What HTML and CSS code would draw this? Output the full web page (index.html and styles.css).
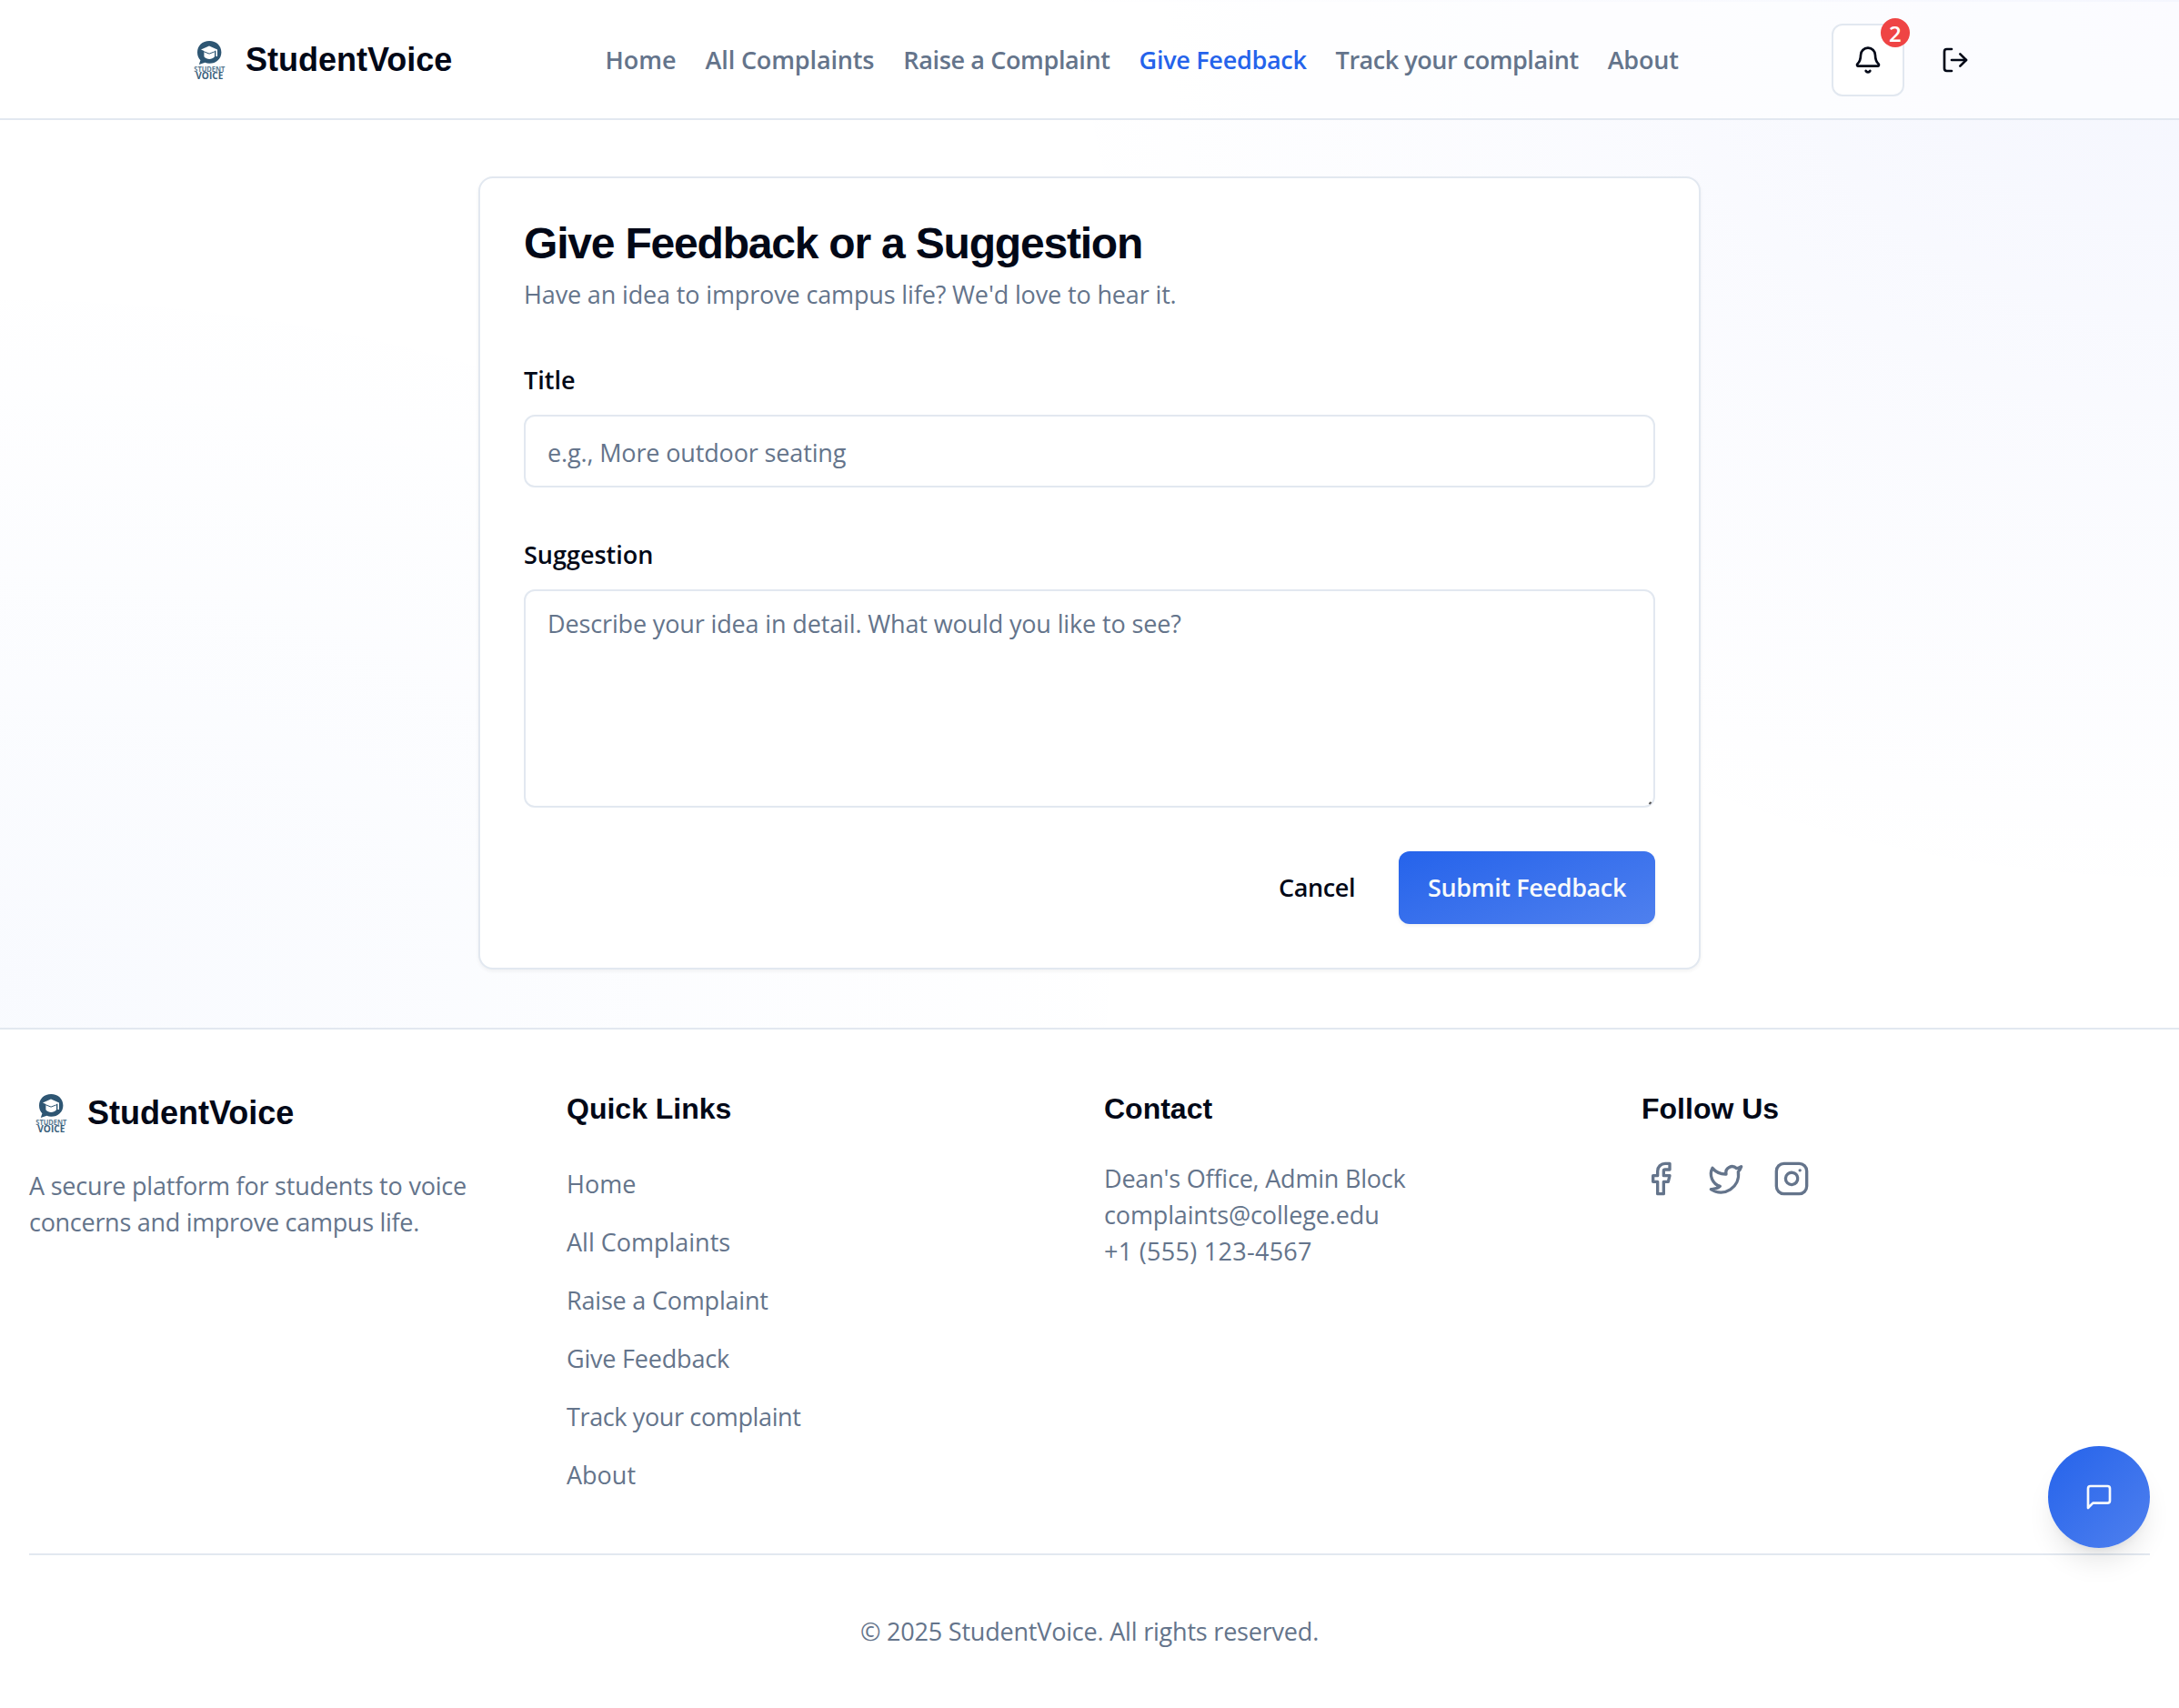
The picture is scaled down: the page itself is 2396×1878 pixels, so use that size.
FILE: index.html
```html
<!DOCTYPE html>
<html lang="en">
<head>
<meta charset="utf-8">
<title>StudentVoice</title>
<link rel="stylesheet" href="styles.css">
</head>
<body>
<header class="header">
  <div class="header-inner">
    <a class="brand">
      <svg class="brand-mark" viewBox="0 0 48 48">
        <path d="M24.200 2.900c-7.800 0-13.200 5.300-13.200 12.500 0 3.900 1.300 6.600 3.400 8.800L12.800 29l6.600-2.200c1.500.6 3.200.9 4.800.9 7.700 0 13.200-5.200 13.200-12.300S32 2.900 24.200 2.900z" fill="#2e5673"/>
        <path d="M24 8.600l-9 3.900 3.400 1.500v6.200c3 3.600 8.600 3.600 11.600 0V14l1.400-.6v6.600H33v-7.500z" fill="#fff"/>
        <path d="M18.300 14.800l5.800 2.300 5.700-2.200" fill="none" stroke="#2e5673"/>
        <text x="24.300" y="36.500" text-anchor="middle" textLength="34" lengthAdjust="spacingAndGlyphs" class="logo-small">STUDENT</text>
        <text x="24.300" y="44.700" text-anchor="middle" textLength="30" lengthAdjust="spacingAndGlyphs" class="logo-big">VOICE</text>
      </svg>
      <span class="brand-name">StudentVoice</span>
    </a>
    <nav class="nav">
      <a>Home</a>
      <a class="snug-1">All Complaints</a>
      <a class="snug-4">Raise a Complaint</a>
      <a class="active snug-3">Give Feedback</a>
      <a class="snug-5">Track your complaint</a>
      <a class="snug-1">About</a>
    </nav>
    <div class="actions">
      <button class="icon-btn outlined" aria-label="Notifications">
        <svg class="icon" viewBox="0 0 24 24"><path d="M10.268 21a2 2 0 0 0 3.464 0"/><path d="M3.262 15.326A1 1 0 0 0 4 17h16a1 1 0 0 0 .74-1.673C19.410 13.956 18 12.499 18 8A6 6 0 0 0 6 8c0 4.499-1.411 5.956-2.738 7.326"/></svg>
        <span class="badge">2</span>
      </button>
      <button class="icon-btn" aria-label="Log out">
        <svg class="icon" viewBox="0 0 24 24"><path d="M9 21H5a2 2 0 0 1-2-2V5a2 2 0 0 1 2-2h4"/><path d="M16 17l5-5-5-5"/><path d="M21 12H9"/></svg>
      </button>
    </div>
  </div>
</header>

<main class="main">
  <section class="card">
    <h1 class="card-title">Give Feedback or a Suggestion</h1>
    <p class="card-sub snug-1">Have an idea to improve campus life? We'd love to hear it.</p>
    <form class="form">
      <div class="field">
        <label for="title">Title</label>
        <input id="title" class="input snug-1" placeholder="e.g., More outdoor seating">
      </div>
      <div class="field grip">
        <label for="suggestion">Suggestion</label>
        <textarea id="suggestion" class="input textarea snug-1" placeholder="Describe your idea in detail. What would you like to see?"></textarea>
      </div>
      <div class="buttons">
        <button type="button" class="btn snug-4">Cancel</button>
        <button type="button" class="btn primary snug-4">Submit Feedback</button>
      </div>
    </form>
  </section>
</main>

<footer class="footer">
  <div class="columns">
    <div>
      <a class="brand">
        <svg class="brand-mark" viewBox="0 0 48 48">
          <path d="M24.200 2.900c-7.800 0-13.200 5.300-13.200 12.500 0 3.900 1.300 6.600 3.400 8.800L12.800 29l6.600-2.200c1.500.6 3.200.9 4.800.9 7.700 0 13.200-5.200 13.200-12.300S32 2.900 24.200 2.900z" fill="#2e5673"/>
          <path d="M24 8.600l-9 3.900 3.400 1.500v6.200c3 3.600 8.600 3.600 11.600 0V14l1.400-.6v6.600H33v-7.500z" fill="#fff"/>
          <path d="M18.300 14.800l5.800 2.300 5.700-2.200" fill="none" stroke="#2e5673"/>
          <text x="24.300" y="36.500" text-anchor="middle" textLength="34" lengthAdjust="spacingAndGlyphs" class="logo-small">STUDENT</text>
          <text x="24.300" y="44.700" text-anchor="middle" textLength="30" lengthAdjust="spacingAndGlyphs" class="logo-big">VOICE</text>
        </svg>
        <span class="brand-name">StudentVoice</span>
      </a>
      <p class="about"><span class="snug-2">A secure platform for students to voice</span> <span class="snug-3">concerns and improve campus life.</span></p>
    </div>
    <div>
      <h2 class="col-title">Quick Links</h2>
      <ul class="links">
        <li>Home</li>
        <li>All Complaints</li>
        <li class="snug-2">Raise a Complaint</li>
        <li class="snug-2">Give Feedback</li>
        <li class="snug-4">Track your complaint</li>
        <li>About</li>
      </ul>
    </div>
    <div>
      <h2 class="col-title">Contact</h2>
      <address class="contact"><span class="snug-2">Dean's Office, Admin Block</span><span class="snug-1">complaints@college.edu</span><span class="loose">+1 (555) 123-4567</span></address>
    </div>
    <div>
      <h2 class="col-title">Follow Us</h2>
      <div class="social">
        <svg class="icon" viewBox="0 0 24 24"><path d="M18 2h-3a5 5 0 0 0-5 5v3H7v4h3v8h4v-8h3l1-4h-4V7a1 1 0 0 1 1-1h3z"/></svg>
        <svg class="icon" viewBox="0 0 24 24"><path d="M22 4s-.7 2.100-2 3.400c1.600 10-9.400 17.300-18 11.600 2.200.1 4.400-.6 6-2C3 15.500.5 9.600 3 5c2.200 2.600 5.600 4.100 9 4-.9-4.200 4-6.600 7-3.800 1.100 0 3-1.200 3-1.200z"/></svg>
        <svg class="icon" viewBox="0 0 24 24"><rect x="2" y="2" width="20" height="20" rx="5"/><path d="M16 11.370A4 4 0 1 1 12.630 8 4 4 0 0 1 16 11.370z"/><path d="M17.500 6.500h.01"/></svg>
      </div>
    </div>
  </div>
  <p class="copyright snug-2">© 2025 StudentVoice. All rights reserved.</p>
</footer>

<button class="fab" aria-label="Open chat">
  <svg class="icon" viewBox="0 0 24 24"><path d="M21 15a2 2 0 0 1-2 2H7l-4 4V5a2 2 0 0 1 2-2h14a2 2 0 0 1 2 2z"/></svg>
</button>
</body>
</html>
```
FILE: styles.css
```css
* { box-sizing: border-box; margin: 0; padding: 0; }
body {
  min-height: 1878px;
  font-family: "Open Sans", "Noto Sans", sans-serif;
  font-size: 27px;
  line-height: 40px;
  color: #020817;
  background:
    radial-gradient(1250px 1000px at 100% 0, rgba(60, 90, 235, .055), transparent 100%),
    radial-gradient(1300px 800px at 0 1080px, rgba(37, 99, 235, .03), transparent 100%),
    #fff;
}
button { border: 0; background: none; font: inherit; color: inherit; }
.icon { width: 32px; height: 32px; fill: none; stroke: currentColor; stroke-width: 2; stroke-linecap: round; stroke-linejoin: round; }

/* optical tracking */
.snug-1 { letter-spacing: -.14px; }
.snug-2 { letter-spacing: -.2px; }
.snug-3 { letter-spacing: -.29px; }
.snug-4 { letter-spacing: -.37px; }
.snug-5 { letter-spacing: -.46px; }
.loose { letter-spacing: .29px; }

.header {
  position: relative;
  margin: 2px 0 -2px;
  height: 130px;
  border-bottom: 2px solid #e2e8f0;
  background: rgba(255, 255, 255, .6);
}
.header-inner { display: flex; align-items: center; justify-content: space-between; width: 1984px; height: 128px; margin: 0 auto; }
.brand { display: flex; align-items: center; gap: 16px; }
.brand-mark { width: 48px; height: 48px; }
.brand-name { font: 700 36px/56px "Liberation Sans", Arial, sans-serif; }
.logo-small { font: 700 9px "Open Sans", sans-serif; fill: #5b7b93; }
.logo-big { font: 700 10.300px "Open Sans", sans-serif; fill: #3a607c; }
.nav { display: flex; gap: 32px; font-weight: 600; color: #64748b; }
.nav .active { color: #2563eb; }
.actions { display: flex; gap: 16px; }
.icon-btn { position: relative; display: flex; align-items: center; justify-content: center; width: 80px; height: 80px; border-radius: 12px; }
.outlined { border: 2px solid #e2e8f0; background: #fff; }
.badge { position: absolute; top: -8px; right: -8px; width: 32px; height: 32px; border-radius: 50%; background: #ef4444; color: #fff; font-weight: 600; font-size: 24px; line-height: 34px; text-align: center; }

.main { padding: 64px 0; }
.card { width: 1344px; height: 872px; margin: 0 auto; padding: 48px; border: 2px solid #e2e8f0; border-radius: 16px; background: #fff; box-shadow: 0 2px 4px rgba(0, 0, 0, .05); }
.card-title { font: 700 48px/48px "Liberation Sans", Arial, sans-serif; letter-spacing: -1.200px; }
.card-sub { margin-top: 12px; color: #64748b; }
.form { display: flex; flex-direction: column; margin-top: 48px; }
.field { position: relative; display: flex; flex-direction: column; margin-bottom: 48px; }
label { padding-top: 2px; font-weight: 600; line-height: 48px; margin-bottom: 14px; }
.input { display: block; width: 100%; height: 80px; padding: 2px 24px 0; border: 2px solid #e2e8f0; border-radius: 12px; background: #fff; font: inherit; color: inherit; }
.input::placeholder { color: #64748b; opacity: 1; }
.textarea { height: 240px; padding: 16px 24px; resize: none; }
.grip::after { content: ""; position: absolute; right: 4px; bottom: 4px; width: 3px; height: 2px; background: #555; transform: rotate(-45deg); }
.buttons { display: flex; justify-content: flex-end; gap: 16px; }
.btn { height: 80px; padding: 0 32px; border-radius: 12px; font-weight: 600; }
.btn.snug-4 { letter-spacing: -.37px; }
.primary { color: #f8fafc; background: linear-gradient(160deg, #2563eb, #4f80ee); box-shadow: 0 2px 4px rgba(0, 0, 0, .06); }

.footer { height: 748px; padding: 0 32px; border-top: 2px solid #e2e8f0; background: #fff; color: #64748b; }
.columns { display: grid; grid-template-columns: repeat(4, 1fr); gap: 32px; height: 576px; padding-top: 64px; }
.footer .brand-name, .col-title { color: #020817; }
.about { margin-top: 32px; }
.col-title { font: 700 32px/46px "Liberation Sans", Arial, sans-serif; margin-bottom: 34px; }
.links { display: flex; flex-direction: column; gap: 24px; padding-top: 6px; list-style: none; }
.contact { display: flex; flex-direction: column; align-items: flex-start; font-style: normal; }
.social { display: flex; gap: 32px; padding-left: 1px; }
.social .icon { width: 40px; height: 40px; }
.copyright { border-top: 2px solid #e2e8f0; padding-top: 64px; text-align: center; }

.fab { position: absolute; left: 2252px; top: 1590px; width: 112px; height: 112px; display: flex; align-items: center; justify-content: center; border-radius: 50%; color: #f8fafc; background: linear-gradient(135deg, #2563eb, #4f80ee); box-shadow: 0 20px 30px -6px rgba(0, 0, 0, .1), 0 8px 12px -8px rgba(0, 0, 0, .1); }
```
